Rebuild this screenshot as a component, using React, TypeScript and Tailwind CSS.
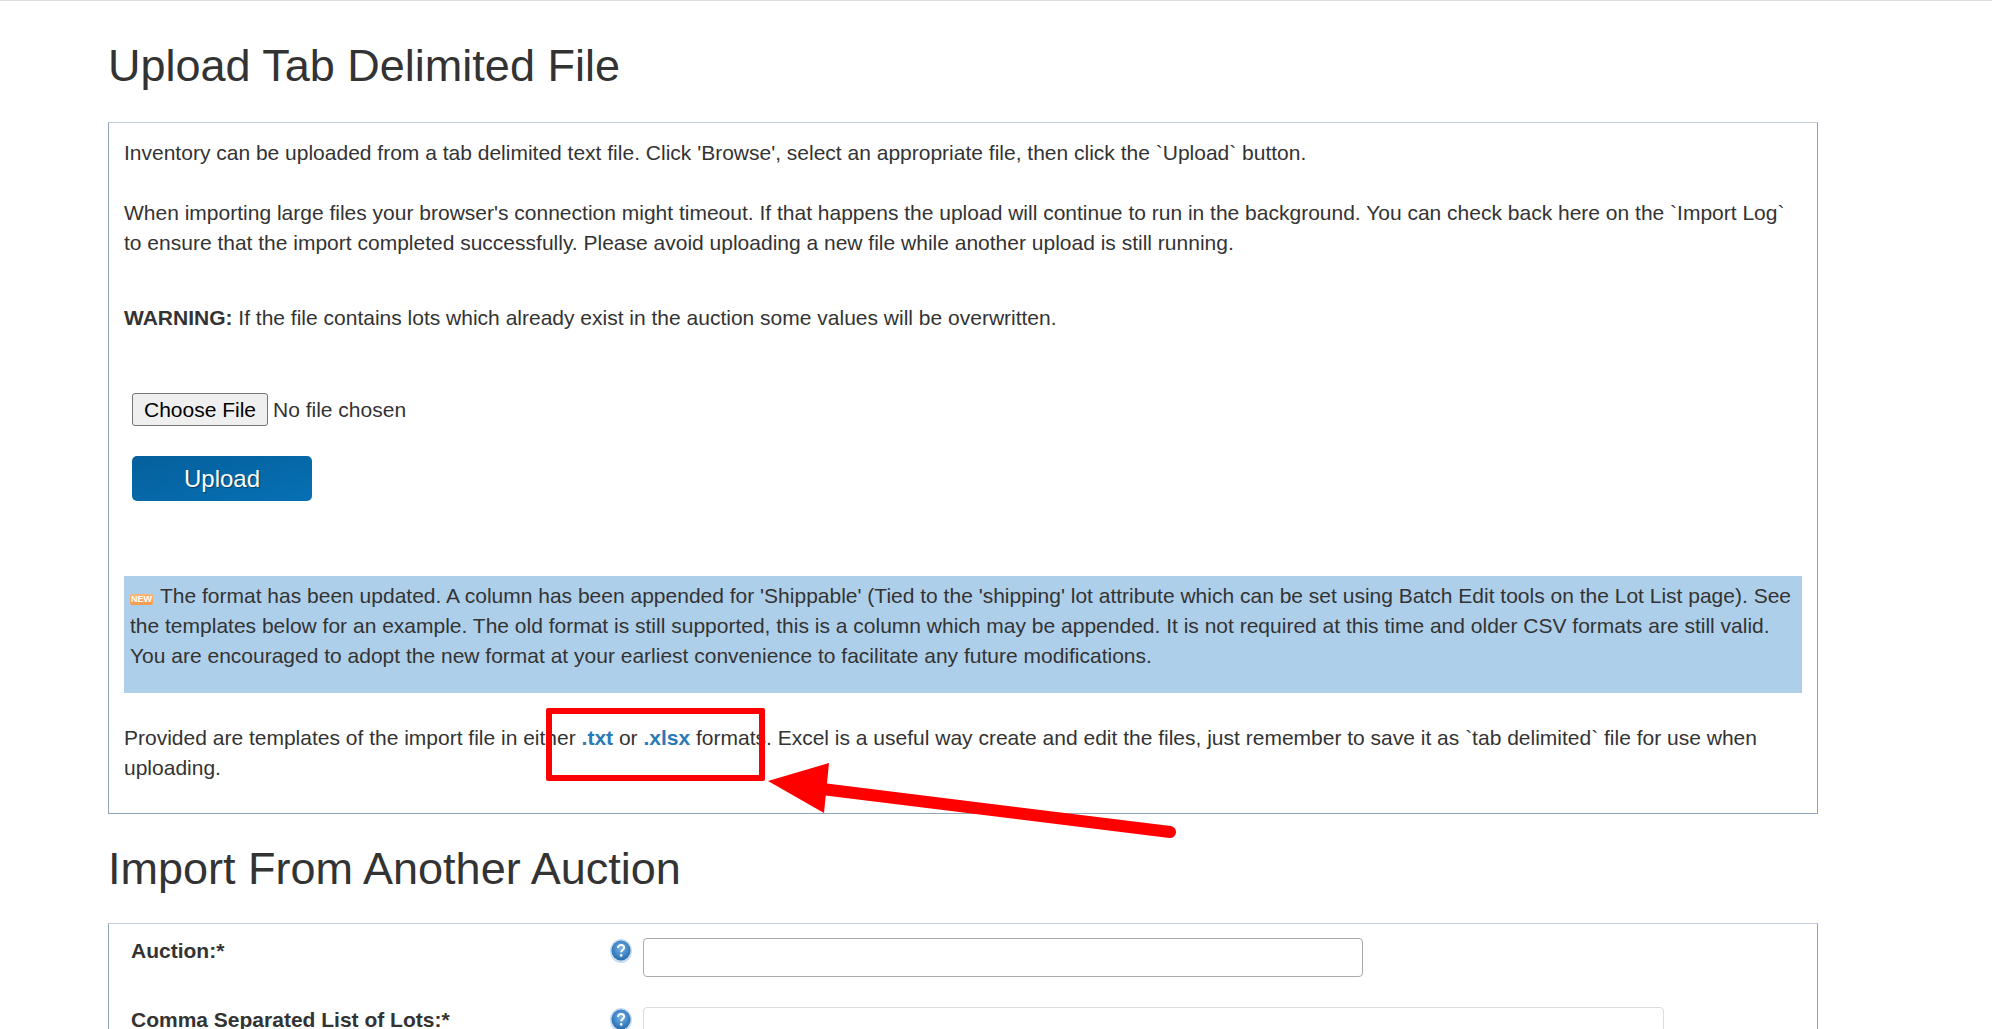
const sans = "font-['Liberation_Sans',Arial,sans-serif]";

function HelpIcon() {
    return (
        <svg width="22" height="24" viewBox="0 0 22 24" className="shrink-0">
            <defs>
                <radialGradient id="helpBlue" cx="50%" cy="40%" r="58%">
                    <stop offset="0%" stopColor="#7fb4e4" />
                    <stop offset="65%" stopColor="#3f86c8" />
                    <stop offset="100%" stopColor="#2a6cab" />
                </radialGradient>
            </defs>
            <ellipse cx="11" cy="12" rx="11" ry="12" fill="#c7dcee" />
            <ellipse cx="11" cy="11.5" rx="9.5" ry="10" fill="url(#helpBlue)" />
            <path d="M7.9 8.8c.3-2 1.5-2.9 3.2-2.9 1.8 0 3 1 3 2.6 0 2.4-2.8 2.4-2.9 4.8" fill="none" stroke="#fff" strokeWidth="2" />
            <circle cx="11.2" cy="16.4" r="1.3" fill="#fff" />
        </svg>
    );
}

function NewBadge() {
    return (
        <span className="inline-flex items-center justify-center w-[23px] h-[11px] mr-[7px] rounded-[2px] bg-linear-to-b from-[#f9b777] to-[#f49a4a] text-white text-[9px] leading-none font-bold align-[1px]">
            NEW
        </span>
    );
}

function Annotation() {
    return (
        <>
            <div className="absolute left-[546px] top-[708px] w-[219px] h-[73px] border-[6px] border-[#ff0000] rounded-[2px]" />
            <svg className="absolute left-0 top-0 pointer-events-none" width="1992" height="1029">
                <path d="M768 781 L829 763 L824 813 Z" fill="#ff0000" />
                <path d="M822 789 L1170 832" stroke="#ff0000" strokeWidth="12" strokeLinecap="round" fill="none" />
            </svg>
        </>
    );
}

export default function App() {
    return (
        <div className={`${sans} relative h-[1029px] w-[1992px] overflow-hidden bg-white text-[#333] text-[21px] leading-[30px]`}>
            <div className="h-px bg-[#ddd]" />
            <div className="pl-[108px] w-[1818px]">
                <h1 className="text-[45px] leading-[46px] font-normal pt-[42px] pb-[33px]">Upload Tab Delimited File</h1>
                <div className="border border-[#c5d0dc] border-l-[#8fa4bc] border-r-[#8fa4bc] border-b-[#8fa4bc] px-[15px] pt-[15px] h-[692px]">
                    <p>Inventory can be uploaded from a tab delimited text file. Click 'Browse', select an appropriate file, then click the `Upload` button.</p>
                    <p className="mt-[30px]">When importing large files your browser's connection might timeout. If that happens the upload will continue to run in the background. You can check back here on the `Import Log` to ensure that the import completed successfully. Please avoid uploading a new file while another upload is still running.</p>
                    <p className="mt-[45px]"><b>WARNING:</b> If the file contains lots which already exist in the auction some values will be overwritten.</p>
                    <div className="mt-[60px] pl-[8px]">
                        <input type="file" className="block h-[33px] leading-[25px] file:h-[33px] file:w-[136px] file:mr-[5px] file:bg-[#efefef] file:border file:border-[#767676] file:rounded-[3px] file:text-black" />
                        <button className="block mt-[30px] w-[180px] h-[45px] rounded-[5px] bg-linear-to-br from-[#05609c] to-[#0670b4] text-white text-[24px] [text-shadow:1px_1px_1px_rgba(0,0,0,0.4)]">Upload</button>
                    </div>
                    <div className="mt-[75px] bg-[#aecfea] px-[6px] pt-[5px] h-[117px]">
                        <NewBadge />The format has been updated. A column has been appended for 'Shippable' (Tied to the 'shipping' lot attribute which can be set using Batch Edit tools on the Lot List page). See the templates below for an example. The old format is still supported, this is a column which may be appended. It is not required at this time and older CSV formats are still valid. You are encouraged to adopt the new format at your earliest convenience to facilitate any future modifications.
                    </div>
                    <p className="mt-[30px]">Provided are templates of the import file in either <a className="font-bold text-[#2a7ab8]">.txt</a> or <a className="font-bold text-[#2a7ab8]">.xlsx</a> formats. Excel is a useful way create and edit the files, just remember to save it as `tab delimited` file for use when uploading.</p>
                </div>
                <h1 className="text-[45px] leading-[46px] font-normal pt-[32px] pb-[31px]">Import From Another Auction</h1>
                <div className="border border-[#c5d0dc] border-l-[#8fa4bc] border-r-[#8fa4bc] pt-[12px] pl-[22px]">
                    <div className="flex items-start h-[69px]">
                        <label className="w-[479px] font-bold">Auction:*</label>
                        <div className="pt-[3px]"><HelpIcon /></div>
                        <input className="ml-[11px] w-[720px] h-[39px] mt-[2px] border border-[#aaa] rounded-[4px]" />
                    </div>
                    <div className="flex items-start h-[70px]">
                        <label className="w-[479px] font-bold">Comma Separated List of Lots:*</label>
                        <div className="pt-[3px]"><HelpIcon /></div>
                        <input className="ml-[11px] w-[1021px] h-[39px] mt-[2px] border border-[#ddd] rounded-[4px]" />
                    </div>
                </div>
            </div>
            <Annotation />
        </div>
    );
}
